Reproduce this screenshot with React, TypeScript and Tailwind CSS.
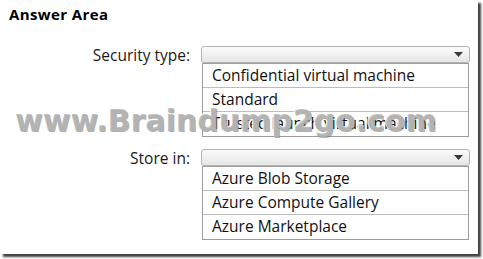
import React from "react";

const font = { fontFamily: '"Open Sans", "Noto Sans", sans-serif' };

function Dropdown() {
  return (
    <div className="h-[17px] w-[269px] rounded-[3px] border border-[#b4b4b4] bg-gradient-to-b from-[#fbfbfb] to-[#e6e6e6] flex items-center justify-end pr-[6px]">
      <svg width="9" height="5" viewBox="0 0 9 5">
        <polygon points="0,0 9,0 4.5,5" fill="#3a3a3a" />
      </svg>
    </div>
  );
}

function OptionList({ items }: { items: string[] }) {
  return (
    <div className="ml-[1px] w-[267px] border border-[#9c9c9c] bg-white">
      {items.map((item, i) => (
        <div
          key={item}
          className={
            "h-[24px] pl-[9px] flex items-center text-[15.5px] text-[#111] leading-none " +
            (i < items.length - 1 ? "border-b border-[#bdbdbd]" : "")
          }
        >
          {item}
        </div>
      ))}
    </div>
  );
}

function Field({ label, items }: { label: string; items: string[] }) {
  return (
    <div className="flex">
      <div className="w-[190px] text-right text-[15.5px] leading-[16px] text-[#1a1a1a] pt-[1px]">
        {label}
      </div>
      <div className="ml-[11px] flex flex-col">
        <Dropdown />
        <OptionList items={items} />
      </div>
    </div>
  );
}

export default function App() {
  return (
    <div className="w-[483px] h-[259px] bg-white" style={font}>
      <div className="relative w-[478px] h-[254px] bg-white shadow-[3px_3px_2px_rgba(0,0,0,0.75)]">
        <div className="pl-[9px] pt-[5px] text-[15px] font-bold tracking-[0.4px] text-black leading-[18px]">
          Answer Area
        </div>

        <div className="mt-[23px]">
          <Field
            label="Security type:"
            items={["Confidential virtual machine", "Standard", "Trusted launch virtual machine"]}
          />
        </div>

        <div className="mt-[12px]">
          <Field
            label="Store in:"
            items={["Azure Blob Storage", "Azure Compute Gallery", "Azure Marketplace"]}
          />
        </div>

        {/* watermark over the content */}
        <div
          className="absolute left-[15px] top-[106px] text-[30px] font-bold leading-none text-[rgba(180,180,180,0.85)] [text-shadow:1px_1px_0_rgba(110,110,110,0.55),-1px_-1px_0_rgba(255,255,255,0.9)] select-none pointer-events-none"
          style={{ fontFamily: '"DejaVu Sans", sans-serif' }}
        >
          www.Braindump2go.com
        </div>
      </div>
    </div>
  );
}
